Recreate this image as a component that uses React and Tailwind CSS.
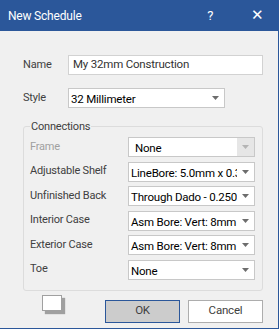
const rows = [
  { label: "Frame", value: "None", disabled: true },
  { label: "Adjustable Shelf", value: "LineBore: 5.0mm x 0.375" },
  { label: "Unfinished Back", value: "Through Dado - 0.250" },
  { label: "Interior Case", value: "Asm Bore: Vert: 8mm x 30" },
  { label: "Exterior Case", value: "Asm Bore: Vert: 8mm x 30" },
  { label: "Toe", value: "None" },
];

function Arrow({ disabled }) {
  return (
    <svg width="7" height="4" viewBox="0 0 7 4">
      <path d="M0 0h7L3.5 4z" fill={disabled ? "#b4b4b4" : "#6d6d6d"} />
    </svg>
  );
}

function Select({ value, disabled, className }) {
  return (
    <div
      className={
        "flex h-[20px] items-stretch border border-[#c8c8c8] bg-white " +
        (className || "")
      }
    >
      <div
        className={
          "flex-1 overflow-hidden whitespace-nowrap pt-[2px] text-[11.5px] " +
          (disabled ? "pl-[6px]" : "pl-[2px]")
        }
      >
        {value}
      </div>
      <div
        className={
          "flex w-[17px] items-center justify-center " +
          (disabled ? "bg-[#e6e6e6]" : "bg-white")
        }
      >
        <Arrow disabled={disabled} />
      </div>
    </div>
  );
}

export default function App() {
  return (
    <div className="flex h-[329px] w-[279px] flex-col border-r border-b border-[#2b579a] bg-[#f0f0f0] font-['Segoe_UI','Roboto',sans-serif] text-[11px] tracking-[-0.2px] text-black">
      <div className="flex h-[31px] items-center bg-[#2b579a] pl-[8px] text-[12px] text-white">
        <span>New Schedule</span>
        <span className="ml-auto mr-[38px] text-[13px]">?</span>
        <span className="mr-[14px] text-[15px] font-light">✕</span>
      </div>

      <div className="flex flex-col pl-[23px]">
        <div className="mt-[24px] flex items-center">
          <span className="w-[45px] text-[#404040]">Name</span>
          <div className="flex h-[20px] w-[195px] items-center border border-[#d2d2d2] bg-white pl-[4px] text-[11.5px] text-[#333]">
            My 32mm Construction
          </div>
        </div>

        <div className="mt-[13px] flex items-center">
          <span className="w-[45px] text-[#404040]">Style</span>
          <Select value="32 Millimeter" className="w-[157px]" />
        </div>

        <fieldset className="mt-[11px] w-[240px] rounded-[3px] border border-[#dcdcdc] px-[6px] pb-[10px]">
          <legend className="px-[1px] leading-[15px] text-[#404040]">
            Connections
          </legend>
          <div className="mt-[3px] flex flex-col gap-[4.5px]">
            {rows.map((r) => (
              <div key={r.label} className="flex items-center">
                <span
                  className={
                    "w-[98px] " +
                    (r.disabled ? "text-[#a0a0a0]" : "text-[#404040]")
                  }
                >
                  {r.label}
                </span>
                <Select
                  value={r.value}
                  disabled={r.disabled}
                  className="w-[127px]"
                />
              </div>
            ))}
          </div>
        </fieldset>

        <div className="flex items-start">
          <div className="ml-[19px] mt-[4px] h-[16px] w-[20px] border border-[#a0a0a0] bg-white shadow-[3px_3px_1px_#a0a0a0]" />
          <button className="ml-[43px] mt-[9px] h-[23px] w-[75px] border border-[#2b579a] bg-[#cccccc] text-[11.5px] text-[#404040]">
            OK
          </button>
          <button className="ml-[8px] mt-[9px] h-[23px] w-[75px] border border-[#adadad] bg-white text-[11.5px] text-[#404040]">
            Cancel
          </button>
        </div>
      </div>
    </div>
  );
}
